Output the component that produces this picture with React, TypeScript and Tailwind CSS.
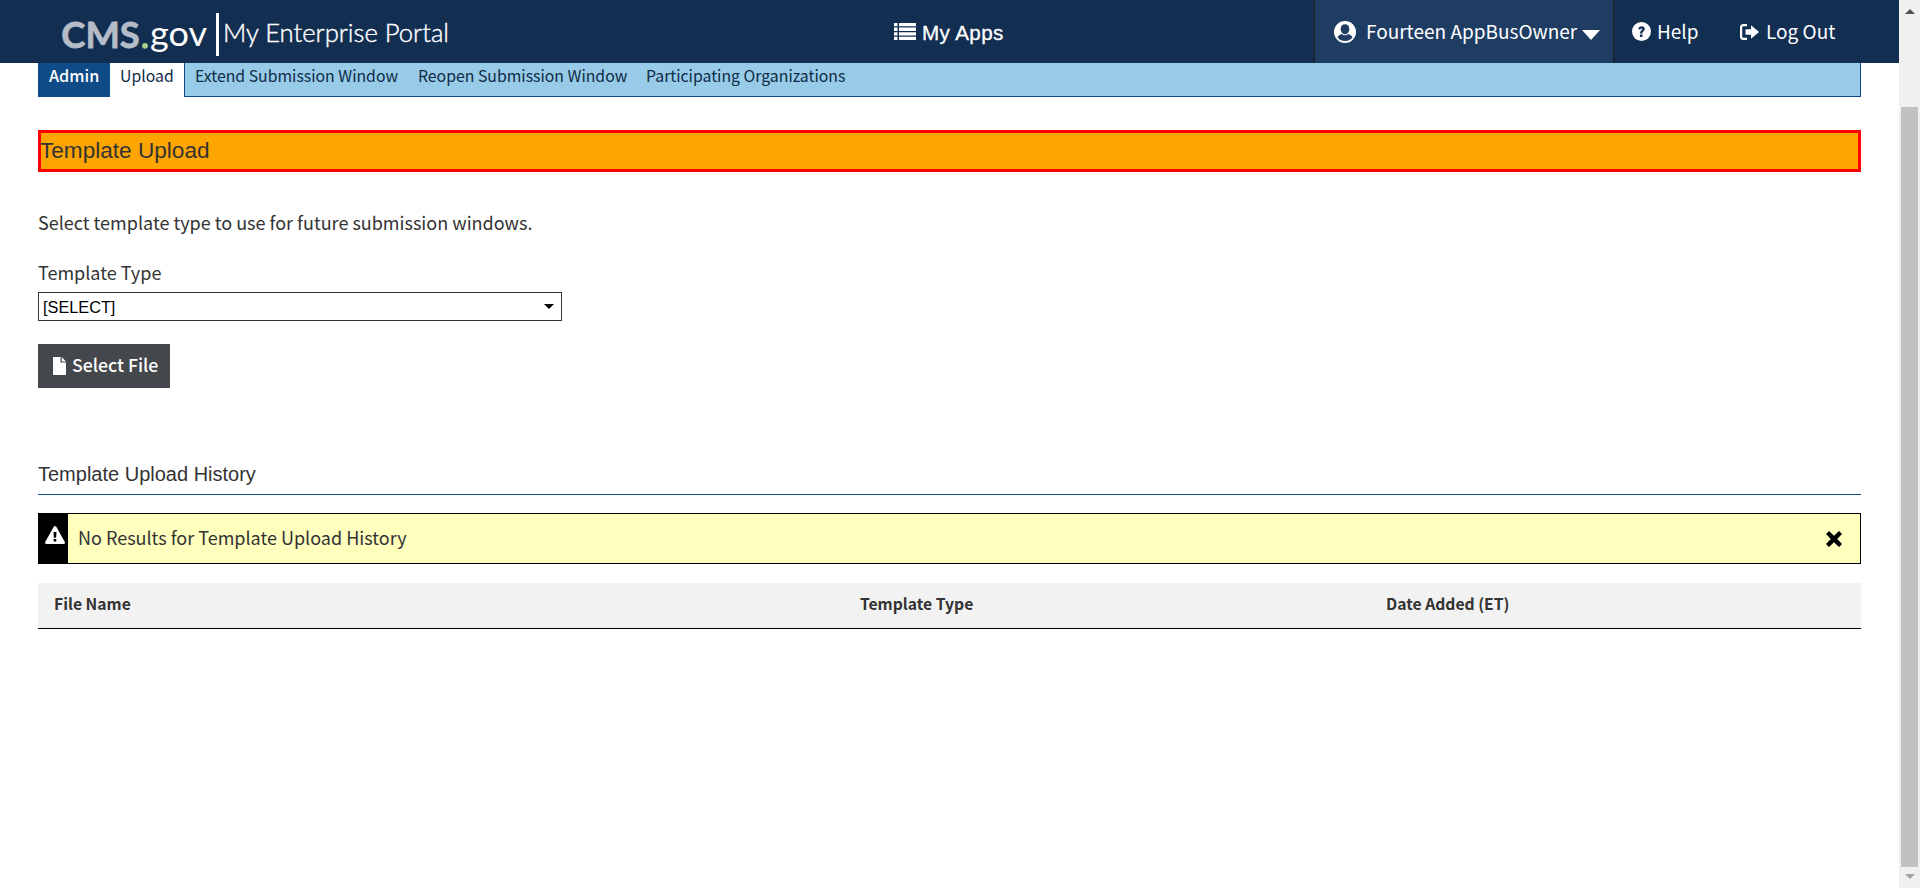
import React from "react";

const sans = "font-['Noto_Sans_CJK_SC',sans-serif]";

function Logo() {
  return (
    <svg width="400" height="63" viewBox="0 0 400 63" className="block shrink-0">
      <g fontFamily="Lato, sans-serif">
        <text x="0.3" y="48" fontSize="37" fontWeight="700" fill="#b4bcc8" stroke="#b4bcc8" strokeWidth="0.8" textLength="78.5" lengthAdjust="spacingAndGlyphs">CMS</text>
        <circle cx="84" cy="45.8" r="2.9" fill="#a5d18c" />
        <text x="89" y="46" fontSize="34" fontWeight="400" fill="#fff" textLength="57" lengthAdjust="spacingAndGlyphs">gov</text>
        <rect x="155" y="13" width="3" height="43" fill="#fff" />
        <text x="162" y="42" fontSize="25" fontWeight="300" fill="#fff" stroke="#fff" strokeWidth="0.4" textLength="226" lengthAdjust="spacingAndGlyphs">My Enterprise Portal</text>
      </g>
    </svg>
  );
}

function Header() {
  return (
    <header className="flex h-[63px] shrink-0 bg-[#122e51] text-white">
      <div className="w-[832px] pl-[61px]"><Logo /></div>
      <div className="flex w-[482px] pl-[62px]">
        <svg width="22" height="17" viewBox="0 0 22 17" className="mt-[23px] shrink-0" fill="#fff">
          <path d="M0 0h3.5v3.3H0zM5 0h17v3.3H5zM0 4.6h3.5v3.3H0zM5 4.6h17v3.3H5zM0 9.2h3.5v3.3H0zM5 9.2h17v3.3H5zM0 13.8h3.5V17H0zM5 13.8h17V17H5z" />
        </svg>
        <span className="ml-[6px] mt-[20px] font-['Liberation_Sans',sans-serif] text-[20.600px] tracking-[0.4px] leading-[26px] [-webkit-text-stroke:0.3px_white]">My Apps</span>
      </div>
      <div className={`flex w-[300px] shrink-0 border-x border-[#222] bg-[#1f3d63] pl-[19px] text-[19px] leading-[30px] ${sans}`}>
        <svg width="22" height="22" viewBox="0 0 22 22" className="mt-[21px] shrink-0">
          <circle cx="11" cy="11" r="11" fill="#fff" />
          <path d="M11 3.2c2.7 0 4.3 2 4.3 4.7S13.6 13.2 11 13.2 6.7 10.6 6.7 7.9 8.3 3.2 11 3.2z" fill="#1f3d63" />
          <path d="M3.5 16.5c1-2.4 2.5-3 4.3-3.6 1.8 1.9 4.6 1.9 6.4 0 1.8.6 3.3 1.2 4.3 3.6-3.7 4.7-11.3 4.7-15 0z" fill="#1f3d63" />
        </svg>
        <span className="ml-[10px] mt-[16px] w-[216px] shrink-0 whitespace-nowrap">Fourteen AppBusOwner</span>
        <svg width="18" height="10" viewBox="0 0 18 10" className="mt-[30px] shrink-0" fill="#fff"><path d="M0 0h18l-9 10z" /></svg>
      </div>
      <div className={`flex pl-[18px] text-[19px] leading-[30px] ${sans}`}>
        <svg width="19" height="19" viewBox="0 0 19 19" className="mt-[22px] shrink-0">
          <circle cx="9.5" cy="9.5" r="9.5" fill="#fff" />
          <path d="M6.3 7.3C6.4 3.2 13 3.3 12.8 7.1c-.1 2.3-2.3 2.2-2.4 4.3H8.1c0-3.1 2-3 2.1-4.2.1-1.1-1.6-1.1-1.7.4zM8 12.5h2.5v2.5H8z" fill="#122e51" />
        </svg>
        <span className="ml-[6px] mt-[16px] w-[83px] whitespace-nowrap">Help</span>
        <svg width="19" height="16" viewBox="0 0 19 16" className="mt-[24px] shrink-0" fill="#fff">
          <path d="M7 0v2.2H3.500Q2.200 2.200 2.200 3.500v9q0 1.300 1.300 1.300H7V16H3.500Q0 16 0 12.500v-9Q0 0 3.500 0zM11 1.200 19 8l-8 6.800v-4H5.500V5.200H11z" />
        </svg>
        <span className="ml-[7px] mt-[16px] whitespace-nowrap">Log Out</span>
      </div>
    </header>
  );
}

function Tabs() {
  return (
    <nav className={`flex h-[34px] border-b border-r border-[#0e4b87] bg-[#97cbe8] text-[15.800px] leading-[26px] whitespace-nowrap text-[#0f2a45] ${sans}`}>
      <span className="h-[34px] w-[72px] bg-[#0e4b87] pl-[11px] text-[16.200px] leading-[25px] font-medium text-white">Admin</span>
      <span className="h-[34px] w-[75px] border-r border-[#0e4b87] bg-white pl-[10px]">Upload</span>
      <span className="w-[223px] pl-[10px]">Extend Submission Window</span>
      <span className="w-[228px] pl-[10px]">Reopen Submission Window</span>
      <span className="pl-[10px]">Participating Organizations</span>
    </nav>
  );
}

function Scrollbar() {
  return (
    <div className="flex w-[21px] flex-col items-center bg-[#f0f0f0]">
      <div className="flex h-[107px] pt-[9px]"><svg width="10" height="5" viewBox="0 0 10 5" fill="#505050"><path d="M5 0l5 5H0z" /></svg></div>
      <div className="h-[760px] w-[17px] bg-[#c1c1c1]" />
      <svg width="10" height="5" viewBox="0 0 10 5" className="mt-[7px]" fill="#a3a3a3"><path d="M0 0h10L5 5z" /></svg>
    </div>
  );
}

export default function App() {
  return (
    <div className="flex h-[888px] w-[1920px] overflow-hidden bg-white text-[#323a45]">
      <div className="flex w-[1899px] flex-col">
        <Header />
        <main className="ml-[38px] w-[1823px]">
          <Tabs />
          <h1 className="mt-[33px] h-[42px] border-3 border-[#f00] bg-[#ffa500] font-['Liberation_Sans',sans-serif] text-[22.600px] leading-[36px] text-[#333]"><span className="-ml-px">Template Upload</span></h1>
          <p className={`mt-[37px] text-[18px] leading-[26px] text-[#333] ${sans}`}>Select template type to use for future submission windows.</p>
          <p className={`mt-[24px] text-[18px] leading-[26px] text-[#333] ${sans}`}>Template Type</p>
          <div className="mt-[7px] flex h-[29px] w-[524px] items-center justify-between border border-[#333] pl-[4px] pr-[7px] font-['Liberation_Sans',sans-serif] text-[16.300px] text-black">
            <span className="pt-[2px]">[SELECT]</span>
            <svg width="10" height="5" viewBox="0 0 10 5"><path d="M0 0h10L5 5z" /></svg>
          </div>
          <button className={`mt-[23px] flex h-[44px] w-[132px] bg-[#44474b] pl-[15px] text-[17.700px] leading-[26px] font-medium text-white ${sans}`}>
            <svg width="13" height="18" viewBox="0 0 13 18" className="mt-[13px] shrink-0" fill="#fff"><path d="M0 0h7.500v5.500H13V18H0zM8.700 0 13 4.500H8.700z" /></svg>
            <span className="ml-[6px] mt-[7px] whitespace-nowrap">Select File</span>
          </button>
          <h2 className="mt-[73px] h-[34px] border-b border-[#0e4b87] font-['Liberation_Sans',sans-serif] text-[20px] leading-[26px] text-[#333]">Template Upload History</h2>
          <div className={`mt-[18px] flex h-[51px] border border-black bg-[#ffffbe] text-[18px] leading-[26px] text-[#333] ${sans}`}>
            <div className="w-[29px] bg-black pl-[6px] pt-[12px]">
              <svg width="20" height="18" viewBox="0 0 20 18"><path d="M8.700.8q1.300-1.600 2.600 0L19.800 16q.5 2-1.300 2h-17Q-.3 18 .2 16z" fill="#fff" /><path d="M8.500 6h3l-.4 5.800H8.900zM8.700 13h2.600v2.500H8.700z" /></svg>
            </div>
            <span className="ml-[10px] mt-[10px] flex-1">No Results for Template Upload History</span>
            <svg width="16" height="16" viewBox="0 0 16 16" className="mr-[18px] mt-[17px]"><path d="M3 0 8 4.800 13 0l3 3-4.800 5L16 13l-3 3-5-4.800L3 16l-3-3 4.800-5L0 3z" /></svg>
          </div>
          <div className={`mt-[19px] grid h-[46px] grid-cols-[806px_526px_1fr] border-b border-black bg-[#f2f2f2] pl-[16px] text-[15.700px] leading-[42px] font-bold text-[#333] ${sans}`}>
            <span>File Name</span><span>Template Type</span><span>Date Added (ET)</span>
          </div>
        </main>
      </div>
      <Scrollbar />
    </div>
  );
}
